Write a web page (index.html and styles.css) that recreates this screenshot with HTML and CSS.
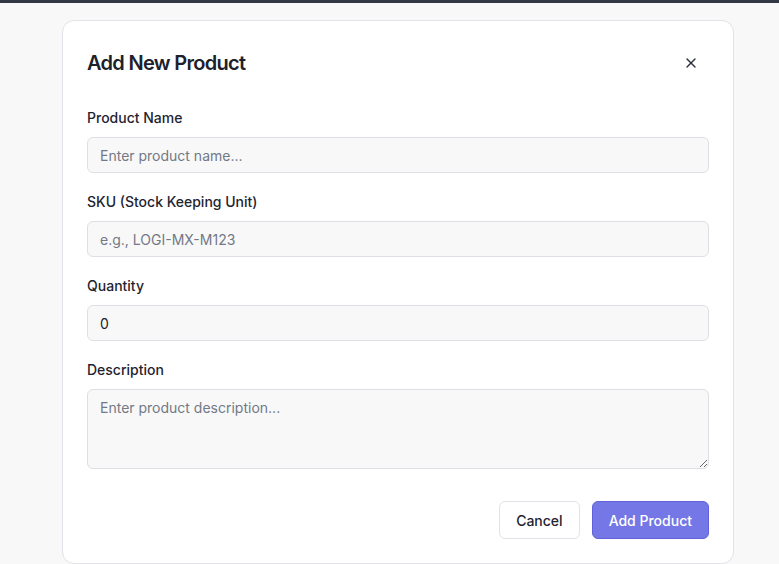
FILE: index.html
```html
<!DOCTYPE html>
<html lang="en">
<head>
<meta charset="utf-8">
<title>Add New Product</title>
<link rel="stylesheet" href="styles.css">
</head>
<body>
<div class="topbar"></div>
<main class="page">
  <section class="modal">
    <header class="modal-header">
      <h2 class="modal-title">Add New Product</h2>
      <button class="close-btn" type="button" aria-label="Close">
        <svg width="16" height="16" viewBox="0 0 24 24" fill="none" stroke="currentColor" stroke-width="2" stroke-linecap="round" stroke-linejoin="round"><path d="M18 6 6 18"/><path d="m6 6 12 12"/></svg>
      </button>
    </header>
    <form class="form">
      <div class="field">
        <label class="label">Product Name</label>
        <input class="input" type="text" placeholder="Enter product name...">
      </div>
      <div class="field">
        <label class="label">SKU (Stock Keeping Unit)</label>
        <input class="input" type="text" placeholder="e.g., LOGI-MX-M123">
      </div>
      <div class="field">
        <label class="label">Quantity</label>
        <input class="input" type="text" value="0">
      </div>
      <div class="field">
        <label class="label">Description</label>
        <textarea class="input textarea" placeholder="Enter product description..."></textarea>
      </div>
      <div class="footer">
        <button class="btn btn-secondary" type="button">Cancel</button>
        <button class="btn btn-primary" type="button">Add Product</button>
      </div>
    </form>
  </section>
</main>
</body>
</html>
```
FILE: styles.css
```css
* { box-sizing: border-box; }
html, body { margin: 0; padding: 0; }
body {
  background: #f8f8f9;
  font-family: Inter, "Liberation Sans", sans-serif;
  color: #1f2430;
  height: 564px;
  overflow: hidden;
}
.topbar {
  height: 3px;
  background: #323845;
}
.page {
  padding: 17px 0 0 62px;
}
.modal {
  width: 672px;
  background: #ffffff;
  border: 1px solid #e2e2e8;
  border-radius: 12px;
  padding: 24px 24px 24px 24px;
}
.modal-header {
  display: flex;
  align-items: center;
  justify-content: space-between;
  height: 36px;
  margin-bottom: 27px;
}
.modal-title {
  margin: 0;
  font-size: 20px;
  line-height: 28px;
  font-weight: 600;
  color: #1c212b;
  letter-spacing: -0.7px;
}
.close-btn {
  width: 36px;
  height: 36px;
  display: flex;
  align-items: center;
  justify-content: center;
  border: none;
  background: transparent;
  color: #2b303b;
  padding: 0;
  border-radius: 6px;
  cursor: pointer;
}
.form { display: block; margin: 0; }
.field { margin-bottom: 19px; }
.label {
  display: block;
  font-size: 14px;
  line-height: 20px;
  font-weight: 500;
  color: #1f2430;
  margin-bottom: 9px;
}
.input {
  display: block;
  width: 100%;
  height: 36px;
  padding: 0 12px;
  font-family: Inter, "Liberation Sans", sans-serif;
  font-size: 14px;
  color: #1a1f29;
  background: #f8f8f9;
  border: 1px solid #dedee5;
  border-radius: 6px;
  outline: none;
}
.input::placeholder { color: #737985; opacity: 1; }
.textarea {
  height: 80px;
  padding: 8px 12px;
  line-height: 20px;
  resize: vertical;
}
.footer {
  display: flex;
  justify-content: flex-end;
  gap: 12px;
  padding-top: 13px;
}
.btn {
  height: 38px;
  padding: 0 16px;
  border-radius: 6px;
  font-family: Inter, "Liberation Sans", sans-serif;
  font-size: 14px;
  font-weight: 500;
  cursor: pointer;
}
.btn-secondary {
  background: #ffffff;
  border: 1px solid #e2e2e8;
  color: #1f2430;
}
.btn-primary {
  background: #7477e5;
  border: 1px solid #5f62da;
  color: #ffffff;
}
```
